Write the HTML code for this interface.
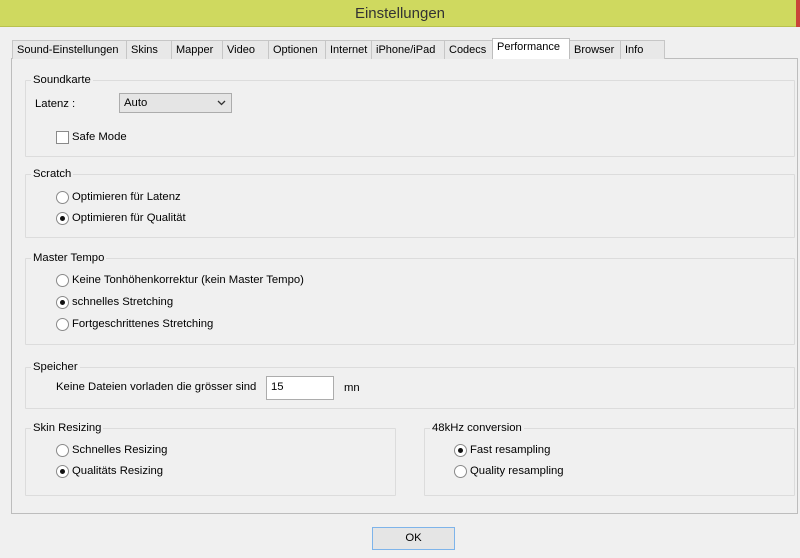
<!DOCTYPE html>
<html><head><meta charset="utf-8"><style>
*{margin:0;padding:0;box-sizing:border-box}
body{width:800px;height:558px;background:#f0f0f0;font-family:"Liberation Sans",Arial,sans-serif;font-size:11.3px;color:#000;position:relative;overflow:hidden}
.a{position:absolute}
.title{left:0;top:0;width:800px;height:27px;background:#cfd95f;border-bottom:1px solid #b9c24e;text-align:center;font-size:15px;line-height:27px;color:#333}
.red{right:0;top:0;width:4px;height:27px;background:#c9443a}
.tab{top:40px;height:19px;border:1px solid #c6c6c6;border-bottom:none;background:#e8e8e8;line-height:18px;padding-left:4px;font-size:11px}
.tab.sel{top:38px;height:21px;background:#fff;line-height:17px;z-index:2;border-color:#bdbdbd}
.panel{left:11px;top:58px;width:787px;height:456px;border:1px solid #bdbdbd;background:#f0f0f0}
.grp{border:1px solid #dcdcdc;border-radius:1px}
.lbl{background:#f0f0f0;padding:0 2px;line-height:13px}
.rad{width:13px;height:13px;border:1px solid #8a8a8a;border-radius:50%;background:#fff}
.rad.on::after{content:"";position:absolute;left:3px;top:3px;width:5px;height:5px;border-radius:50%;background:#111}
</style></head><body>
<div class="a title">Einstellungen</div>
<div class="a red"></div>
<div class="a panel"></div>
<div class="a tab" style="left:12px;width:115px">Sound-Einstellungen</div>
<div class="a tab" style="left:126px;width:46px">Skins</div>
<div class="a tab" style="left:171px;width:52px">Mapper</div>
<div class="a tab" style="left:222px;width:47px">Video</div>
<div class="a tab" style="left:268px;width:58px">Optionen</div>
<div class="a tab" style="left:325px;width:47px">Internet</div>
<div class="a tab" style="left:371px;width:74px">iPhone/iPad</div>
<div class="a tab" style="left:444px;width:49px">Codecs</div>
<div class="a tab sel" style="left:492px;width:78px">Performance</div>
<div class="a tab" style="left:569px;width:52px">Browser</div>
<div class="a tab" style="left:620px;width:45px">Info</div>

<div class="a grp" style="left:25px;top:80px;width:770px;height:77px"></div>
<div class="a lbl" style="left:31px;top:74px">Soundkarte</div>
<div class="a" style="left:35px;top:98px">Latenz :</div>
<div class="a" style="left:119px;top:93px;width:113px;height:20px;border:1px solid #acacac;background:#e5e5e5;padding:3px 0 0 4px">Auto<svg class="a" style="right:5px;top:6px" width="9" height="6"><path d="M1 1L4.5 4.5L8 1" stroke="#333" stroke-width="1.3" fill="none"/></svg></div>
<div class="a" style="left:56px;top:131px;width:13px;height:13px;border:1px solid #8a8a8a;background:#fff"></div>
<div class="a" style="left:72px;top:131px">Safe Mode</div>

<div class="a grp" style="left:25px;top:174px;width:770px;height:64px"></div>
<div class="a lbl" style="left:31px;top:168px">Scratch</div>
<div class="a rad" style="left:56px;top:191px"></div><div class="a" style="left:72px;top:191px">Optimieren für Latenz</div>
<div class="a rad on" style="left:56px;top:212px"></div><div class="a" style="left:72px;top:212px">Optimieren für Qualität</div>

<div class="a grp" style="left:25px;top:258px;width:770px;height:87px"></div>
<div class="a lbl" style="left:31px;top:252px">Master Tempo</div>
<div class="a rad" style="left:56px;top:274px"></div><div class="a" style="left:72px;top:274px">Keine Tonhöhenkorrektur (kein Master Tempo)</div>
<div class="a rad on" style="left:56px;top:296px"></div><div class="a" style="left:72px;top:296px">schnelles Stretching</div>
<div class="a rad" style="left:56px;top:318px"></div><div class="a" style="left:72px;top:318px">Fortgeschrittenes Stretching</div>

<div class="a grp" style="left:25px;top:367px;width:770px;height:42px"></div>
<div class="a lbl" style="left:31px;top:361px">Speicher</div>
<div class="a" style="left:56px;top:381px">Keine Dateien vorladen die grösser sind</div>
<div class="a" style="left:266px;top:376px;width:68px;height:24px;border:1px solid #acacac;background:#fff;padding:4px 0 0 4px">15</div>
<div class="a" style="left:344px;top:382px">mn</div>

<div class="a grp" style="left:25px;top:428px;width:371px;height:68px"></div>
<div class="a lbl" style="left:31px;top:422px">Skin Resizing</div>
<div class="a rad" style="left:56px;top:444px"></div><div class="a" style="left:72px;top:444px">Schnelles Resizing</div>
<div class="a rad on" style="left:56px;top:465px"></div><div class="a" style="left:72px;top:465px">Qualitäts Resizing</div>

<div class="a grp" style="left:424px;top:428px;width:371px;height:68px"></div>
<div class="a lbl" style="left:430px;top:422px">48kHz conversion</div>
<div class="a rad on" style="left:454px;top:444px"></div><div class="a" style="left:470px;top:444px">Fast resampling</div>
<div class="a rad" style="left:454px;top:465px"></div><div class="a" style="left:470px;top:465px">Quality resampling</div>

<div class="a" style="left:372px;top:527px;width:83px;height:23px;border:1px solid #7eb4ea;background:#e5e5e5;text-align:center;line-height:21px">OK</div>
</body></html>
